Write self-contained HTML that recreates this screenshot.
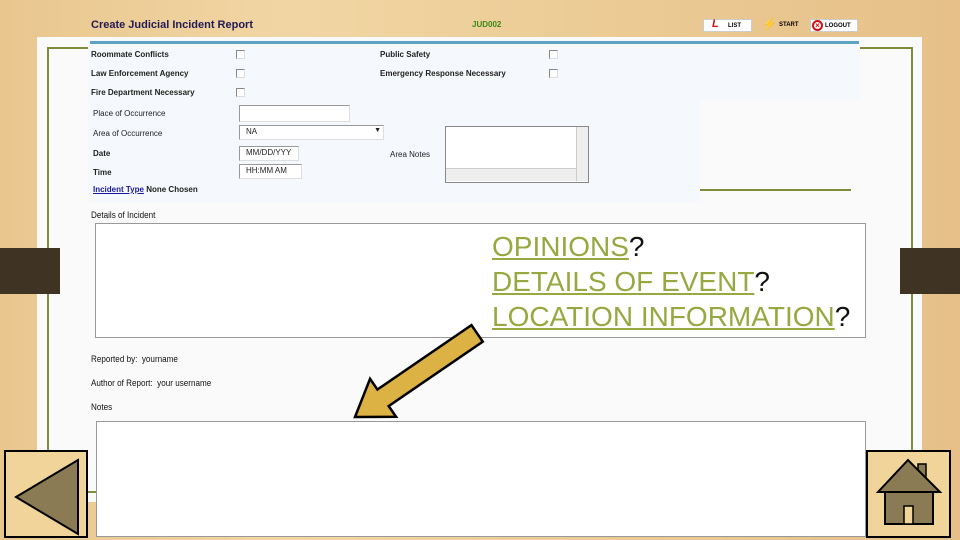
<!DOCTYPE html>
<html><head><meta charset="utf-8"><style>
*{margin:0;padding:0;box-sizing:border-box}
body{width:960px;height:540px;overflow:hidden;position:relative;background:linear-gradient(90deg,#e9c68e,#f1d6a4 30%,#eccc96 60%,#e6c088);font-family:"Liberation Sans",sans-serif}
.a{position:absolute}
.lbl{position:absolute;font-size:8px;font-weight:bold;color:#222}
.cb{position:absolute;width:9px;height:9px;border:1px solid #888;border-right-color:#ddd;border-bottom-color:#ddd;background:#fff}
.inp{position:absolute;background:#fff;border:1px solid #999;border-right-color:#ddd;border-bottom-color:#ddd;font-size:8px;padding:1px 6px;color:#222}
.q{font-size:28px;color:#98a840;text-decoration:underline;text-decoration-thickness:2px;text-underline-offset:2px;white-space:nowrap}
.q b{font-weight:normal;color:#111;text-decoration:none;display:inline-block}
.s{font-size:9px;color:#111;position:absolute;transform:scaleX(0.9);transform-origin:0 0;white-space:nowrap}
</style></head><body>
<div class="a" style="left:37px;top:37px;width:885px;height:465px;background:#fafafa"></div>
<div class="a" style="left:47px;top:47px;width:866px;height:446px;border:2px solid #7e8c3a"></div>
<div class="a" style="left:88px;top:40px;width:772px;height:60px;background:#f5f8fc"></div>
<div class="a" style="left:88px;top:100px;width:612px;height:102px;background:#f5f8fc"></div>
<div class="a" style="left:90px;top:41px;width:769px;height:3px;background:#5ea2c2"></div>
<div class="a" style="left:700px;top:189px;width:151px;height:2px;background:#7e8c3a"></div>
<div class="a" style="left:91px;top:19px;font-size:11px;font-weight:bold;color:#221a55">Create Judicial Incident Report</div>
<div class="a" style="left:472px;top:20px;font-size:8px;font-weight:bold;color:#3a8a1a">JUD002</div>
<div class="a" style="left:703px;top:19px;width:49px;height:13px;background:#fff;border:1px solid #ccc;font-size:6px;font-weight:bold;padding:3px 0 0 24px">LIST</div>
<div class="a" style="left:712px;top:18px;color:#d01010;font-style:italic;font-size:11px;font-weight:bold">L</div>
<div class="a" style="left:762px;top:17px;color:#d01010;font-size:12px">⚡</div>
<div class="a" style="left:779px;top:22px;font-size:6px;font-weight:bold">START</div>
<div class="a" style="left:810px;top:19px;width:48px;height:13px;background:#fff;border:1px solid #ccc;font-size:6px;font-weight:bold;padding:3px 0 0 14px">LOGOUT</div>
<div class="a" style="left:812px;top:20px;width:11px;height:11px;border:2px solid #d01010;border-radius:50%;color:#d01010;font-size:8px;line-height:7px;text-align:center;font-weight:bold">×</div>
<div class="lbl" style="left:91px;top:50px">Roommate Conflicts</div>
<div class="lbl" style="left:91px;top:69px">Law Enforcement Agency</div>
<div class="lbl" style="left:91px;top:88px">Fire Department Necessary</div>
<div class="lbl" style="left:380px;top:50px">Public Safety</div>
<div class="lbl" style="left:380px;top:69px">Emergency Response Necessary</div>
<div class="cb" style="left:236px;top:50px"></div><div class="cb" style="left:236px;top:69px"></div><div class="cb" style="left:236px;top:88px"></div>
<div class="cb" style="left:549px;top:50px"></div><div class="cb" style="left:549px;top:69px"></div>
<div class="lbl" style="left:93px;top:109px;font-weight:normal">Place of Occurrence</div>
<div class="lbl" style="left:93px;top:129px;font-weight:normal">Area of Occurrence</div>
<div class="lbl" style="left:93px;top:149px">Date</div>
<div class="lbl" style="left:93px;top:168px">Time</div>
<div class="lbl" style="left:93px;top:185px"><span style="color:#1a1aa0;text-decoration:underline">Incident Type</span> None Chosen</div>
<div class="inp" style="left:239px;top:105px;width:111px;height:17px"></div>
<div class="inp" style="left:239px;top:125px;width:145px;height:15px">NA<span style="position:absolute;right:2px;top:1px;font-size:7px">▼</span></div>
<div class="inp" style="left:239px;top:146px;width:60px;height:15px">MM/DD/YYY</div>
<div class="inp" style="left:239px;top:164px;width:63px;height:15px">HH:MM AM</div>
<div class="lbl" style="left:390px;top:150px;font-weight:normal">Area Notes</div>
<div class="inp" style="left:445px;top:126px;width:144px;height:57px;border:1px solid #888"></div>
<div class="a" style="left:446px;top:168px;width:130px;height:13px;background:#eee;border-top:1px solid #ccc"></div>
<div class="a" style="left:576px;top:127px;width:12px;height:54px;background:#eee;border-left:1px solid #ccc"></div>
<div class="s" style="left:91px;top:210px">Details of Incident</div>
<div class="a" style="left:95px;top:223px;width:771px;height:115px;background:#fff;border:1px solid #999"></div>
<div class="a q" style="left:492px;top:229px;line-height:35px">OPINIONS<b>?</b><br>DETAILS OF EVENT<b>?</b><br>LOCATION INFORMATION<b>?</b></div>
<div class="s" style="left:91px;top:354px">Reported by:&nbsp; yourname</div>
<div class="s" style="left:91px;top:378px">Author of Report:&nbsp; your username</div>
<div class="s" style="left:91px;top:402px">Notes</div>
<div class="a" style="left:96px;top:421px;width:770px;height:116px;background:#fff;border:1px solid #999"></div>
<div class="a" style="left:0;top:248px;width:60px;height:46px;background:#3f3323"></div>
<div class="a" style="left:900px;top:248px;width:60px;height:46px;background:#3f3323"></div>
<svg class="a" style="left:0;top:0" width="960" height="540">
<g transform="translate(355,417) rotate(145.6)"><polygon points="0,0 -34,-23 -34,-10 -148,-10 -148,10 -34,10 -34,23" fill="#dcb244" stroke="#000" stroke-width="2.5" stroke-linejoin="miter"/></g>
<rect x="5" y="451" width="82" height="86" fill="#f0d49a" stroke="#000" stroke-width="2"/>
<polygon points="16,497 78,460 78,534" fill="#8b7b54" stroke="#000" stroke-width="2"/>
<rect x="867" y="451" width="83" height="86" fill="#f0d49a" stroke="#000" stroke-width="2"/>
<rect x="918" y="464" width="8" height="18" fill="#8b7b54" stroke="#000" stroke-width="1.5"/>
<polygon points="878,492 908,460 940,492" fill="#8b7b54" stroke="#000" stroke-width="2"/>
<rect x="885" y="492" width="48" height="32" fill="#8b7b54" stroke="#000" stroke-width="2"/>
<rect x="904" y="506" width="9" height="18" fill="#f0d49a" stroke="#000" stroke-width="1.5"/>
</svg>
</body></html>
